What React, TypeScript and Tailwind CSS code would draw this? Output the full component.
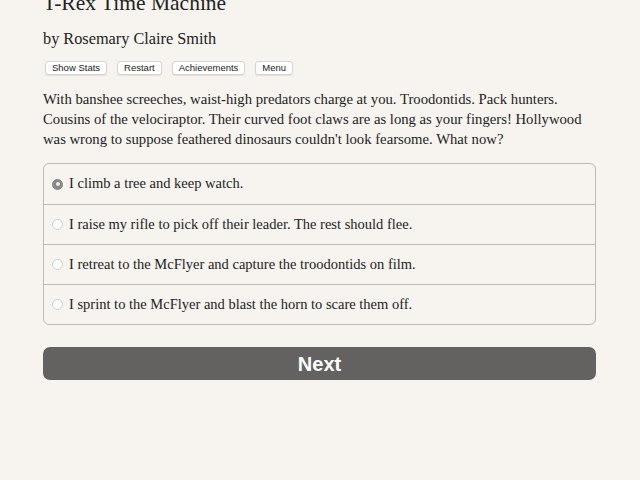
const CHOICES = [
  "I climb a tree and keep watch.",
  "I raise my rifle to pick off their leader. The rest should flee.",
  "I retreat to the McFlyer and capture the troodontids on film.",
  "I sprint to the McFlyer and blast the horn to scare them off.",
];

const MENU = ["Show Stats", "Restart", "Achievements", "Menu"];

export default function App() {
  const selected = 0;

  return (
    <div className="min-h-[480px] w-[640px] overflow-hidden bg-[#f7f4f0] text-[#222] font-['Liberation_Serif',serif]">
      <div className="ml-[43px] w-[553px]">
        <h1 className="mt-[-12px] text-[21.5px] leading-[30px]">T-Rex Time Machine</h1>
        <div className="mt-[10px] text-[16.3px] leading-[22px]">by Rosemary Claire Smith</div>

        <div className="mt-[11px] ml-[2px] flex gap-[10px] font-['Liberation_Sans',sans-serif]">
          {MENU.map((label) => (
            <button
              key={label}
              className="h-[14px] rounded-[3px] border border-[#d6d4d0] bg-white px-[6px] text-[9.5px] leading-[12px] text-[#222] shadow-[0_1px_1px_rgba(0,0,0,0.08)]"
            >
              {label}
            </button>
          ))}
        </div>

        <p className="mt-[14px] pr-[10px] text-[14.7px] leading-[20px]">
          With banshee screeches, waist-high predators charge at you. Troodontids. Pack hunters.
          Cousins of the velociraptor. Their curved foot claws are as long as your fingers! Hollywood
          was wrong to suppose feathered dinosaurs couldn't look fearsome. What now?
        </p>

        {/* choice list */}
        <div className="mt-[14px] overflow-hidden rounded-[6px] border border-[#bdbbb8]">
          {CHOICES.map((text, i) => (
            <label
              key={i}
              className={`flex h-[40px] items-center text-[14.5px] ${i > 0 ? "border-t border-[#bdbbb8]" : ""}`}
            >
              <span
                className={`ml-[8px] mr-[6px] flex h-[11px] w-[11px] items-center justify-center rounded-full border ${
                  i === selected ? "border-[#8a8886] bg-[#8a8886]" : "border-[#d0cecb] bg-white"
                }`}
              >
                {i === selected && <span className="h-[4px] w-[4px] rounded-full bg-[#eeeeee]" />}
              </span>
              {text}
            </label>
          ))}
        </div>

        <button className="mt-[22px] h-[33px] w-full rounded-[7px] bg-[#636260] font-['Liberation_Sans',sans-serif] text-[20px] font-bold text-white">
          Next
        </button>
      </div>
    </div>
  );
}
